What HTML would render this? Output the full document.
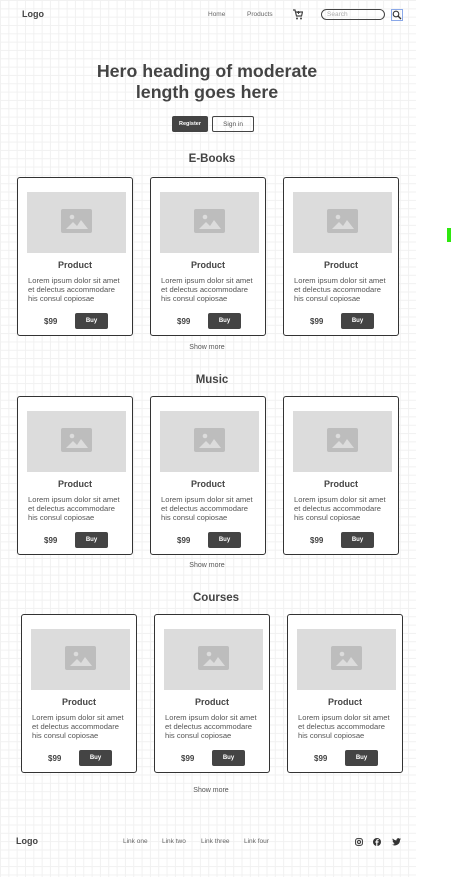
<!DOCTYPE html>
<html><head><meta charset="utf-8"><style>
*{margin:0;padding:0;box-sizing:border-box}
body{width:452px;height:877px;background:#fff;font-family:"Liberation Sans",sans-serif;color:#444;position:relative;overflow:hidden}
#pg{position:absolute;left:0;top:0;width:416px;height:877px;background-color:#fff;background-image:linear-gradient(#f1f1f1 1px,transparent 1px),linear-gradient(90deg,#f1f1f1 1px,transparent 1px);background-size:8.33px 8.33px}
.a{position:absolute}
.t{position:absolute;white-space:nowrap}
.card{position:absolute;width:116px;height:159px;border:1px solid #333;border-radius:3px;background:#fff}
.img{position:absolute;left:9px;top:14px;width:99px;height:61px;background:#dcdcdc}
.img svg{position:absolute;left:34px;top:17px}
.pn{position:absolute;left:0;width:100%;top:82px;text-align:center;font-weight:bold;font-size:9px;color:#444}
.ds{position:absolute;left:10px;top:98px;font-size:7.6px;line-height:9px;color:#555;white-space:nowrap}
.pr{position:absolute;left:26px;top:139px;font-weight:bold;font-size:8px;color:#444}
.fx{display:flex;align-items:center;justify-content:center}
.buy{position:absolute;left:57px;top:135px;width:33px;height:16px;background:#444;color:#fff;border-radius:2px;font-size:6px;font-weight:bold}
.sec{position:absolute;width:416px;text-align:center;font-weight:bold;font-size:11.5px;color:#444}
.sm{position:absolute;width:416px;text-align:center;font-size:7px;color:#555}
</style></head><body>
<div id="pg"></div>
<div class="t" style="left:22px;top:9px;font-weight:bold;font-size:9px">Logo</div>
<div class="t" style="left:208px;top:11px;font-size:6.5px;color:#666">Home</div>
<div class="t" style="left:247px;top:11px;font-size:6.5px;color:#666">Products</div>
<svg class="a" style="left:292px;top:9px" width="11" height="11" viewBox="0 0 11 11"><path d="M1 1h2l1.5 6h5l1-4H4" fill="none" stroke="#444" stroke-width="1.2"/><circle cx="5" cy="9.5" r="1" fill="#444"/><circle cx="9" cy="9.5" r="1" fill="#444"/><path d="M6.5 2v3M5 3.5h3" stroke="#444"/></svg>
<div class="a" style="left:321px;top:9px;width:64px;height:11px;border:1px solid #444;border-radius:6px;font-size:6.5px;color:#aaa;padding-left:5px;line-height:10px">Search</div>
<div class="a" style="left:391px;top:9px;width:12px;height:12px;border:1px solid #8aa8e8"><svg width="10" height="10" viewBox="0 0 10 10" style="position:absolute;left:0;top:0"><circle cx="4" cy="4" r="2.8" fill="none" stroke="#333" stroke-width="1.1"/><path d="M6 6l3 3" stroke="#333" stroke-width="1.3"/></svg></div>
<div class="t" style="left:0;width:414px;top:61px;text-align:center;font-weight:bold;font-size:17.8px;line-height:21px;white-space:normal;color:#444">Hero heading of moderate<br>length goes here</div>
<div class="a fx" style="left:172px;top:116px;width:36px;height:16px;background:#444;border-radius:2px;color:#fff;font-size:5.5px;font-weight:bold">Register</div>
<div class="a fx" style="left:212px;top:116px;width:42px;height:16px;border:1px solid #444;border-radius:2px;color:#555;font-size:6.5px">Sign in</div>

<div class="sec" style="top:153px;left:4px">E-Books</div>
<div class="sec" style="top:374px;left:4px">Music</div>
<div class="sec" style="top:592px;left:8px">Courses</div>
<div class="sm" style="top:344px;left:-1px">Show more</div>
<div class="sm" style="top:562px;left:-1px">Show more</div>
<div class="sm" style="top:787px;left:3px">Show more</div>

<div id="cards"></div>
<script>
var pos=[[17,177],[150,177],[283,177],[17,396],[150,396],[283,396],[21,614],[154,614],[287,614]];
var h='';
pos.forEach(function(p){h+='<div class="card" style="left:'+p[0]+'px;top:'+p[1]+'px"><div class="img"><svg width="31" height="24" viewBox="0 0 31 24"><rect width="31" height="24" rx="2" fill="#bdbdbd"/><circle cx="11" cy="8" r="2.3" fill="#dcdcdc"/><path d="M5 20l7-7 4 4 4-6 7 9z" fill="#dcdcdc"/></svg></div><div class="pn">Product</div><div class="ds">Lorem ipsum dolor sit amet<br>et delectus accommodare<br>his consul copiosae</div><div class="pr">$99</div><div class="buy fx">Buy</div></div>';});
document.getElementById('cards').innerHTML=h;
</script>

<div class="t" style="left:16px;top:836px;font-weight:bold;font-size:9px">Logo</div>
<div class="t" style="left:123px;top:838px;font-size:6.5px;color:#666">Link one</div>
<div class="t" style="left:162px;top:838px;font-size:6.5px;color:#666">Link two</div>
<div class="t" style="left:201px;top:838px;font-size:6.5px;color:#666">Link three</div>
<div class="t" style="left:244px;top:838px;font-size:6.5px;color:#666">Link four</div>
<svg class="a" style="left:355px;top:838px" width="8" height="8" viewBox="0 0 8 8"><rect x=".6" y=".6" width="6.8" height="6.8" rx="2" fill="none" stroke="#333" stroke-width="1"/><circle cx="4" cy="4" r="1.5" fill="none" stroke="#333"/></svg>
<svg class="a" style="left:373px;top:838px" width="8" height="8" viewBox="0 0 8 8"><circle cx="4" cy="4" r="4" fill="#333"/><path d="M4.4 8V4.6h1.1l.2-1.2H4.4v-.7c0-.4.2-.6.6-.6h.7V1.1H4.8c-1 0-1.6.6-1.6 1.5v.8H2.3v1.2h.9V8z" fill="#fff"/></svg>
<svg class="a" style="left:392px;top:838px" width="9" height="8" viewBox="0 0 9 8"><path d="M9 1c-.3.2-.7.3-1 .3.4-.2.6-.6.8-1-.4.2-.8.4-1.2.5A1.8 1.8 0 0 0 4.5 2.4 5 5 0 0 1 .8.5a1.8 1.8 0 0 0 .6 2.4c-.3 0-.6-.1-.8-.2 0 .9.6 1.6 1.4 1.8-.3.1-.6.1-.8 0 .2.7.9 1.3 1.7 1.3A3.7 3.7 0 0 1 0 6.6 5.2 5.2 0 0 0 8 2.2V2c.4-.3.7-.6 1-1z" fill="#333"/></svg>
<div class="a" style="left:447px;top:228px;width:4px;height:14px;background:#2ee80e"></div>
</body></html>
